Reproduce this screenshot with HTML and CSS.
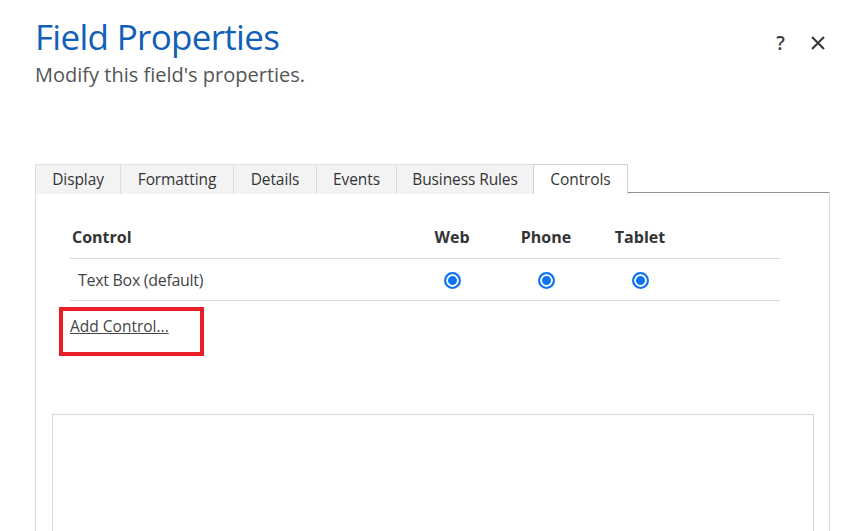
FILE: index.html
```html
<!DOCTYPE html>
<html>
<head>
<meta charset="utf-8">
<link rel="stylesheet" href="styles.css">
</head>
<body>
<div class="dialog">
  <header class="head">
    <div class="titles">
      <h1 class="title">Field Properties</h1>
      <p class="subtitle">Modify this field's properties.</p>
    </div>
    <div class="actions">
      <span class="help">?</span>
      <svg class="close" width="16" height="16" viewBox="0 0 16 16"><path d="M2 2 L14 14 M14 2 L2 14" stroke="#3b3b3b" stroke-width="2.2" fill="none"/></svg>
    </div>
  </header>
  <div class="panel">
    <div class="tabs">
      <div class="tab t-display">Display</div>
      <div class="tab t-format">Formatting</div>
      <div class="tab t-details">Details</div>
      <div class="tab t-events">Events</div>
      <div class="tab t-rules">Business Rules</div>
      <div class="tab t-controls active">Controls</div>
      <div class="tab-fill"></div>
    </div>
    <div class="body">
      <div class="grid">
        <div class="hcell first">Control</div>
        <div class="hcell c">Web</div>
        <div class="hcell c">Phone</div>
        <div class="hcell c">Tablet</div>
        <div class="hcell"></div>
        <div class="cell first">Text Box (default)</div>
        <div class="cell c"><span class="radio"></span></div>
        <div class="cell c"><span class="radio"></span></div>
        <div class="cell c"><span class="radio"></span></div>
        <div class="cell"></div>
      </div>
      <div class="add-wrap"><a class="add" href="#">Add Control...</a></div>
      <div class="props"></div>
    </div>
  </div>
</div>
</body>
</html>
```

FILE: styles.css
```css
* { box-sizing: border-box; }
html, body { margin: 0; padding: 0; background: #fff; overflow: hidden; }
body {
  font-family: "Segoe UI", "Open Sans", "Noto Sans", sans-serif;
  color: #333;
  width: 862px;
  height: 531px;
}
.dialog { height: 531px; display: flex; flex-direction: column; }
.head {
  display: flex;
  justify-content: space-between;
  padding: 14px 36px 0 35px;
  height: 164px;
}
.title {
  margin: 0;
  font-weight: 400;
  font-size: 35px;
  line-height: 46px;
  color: #1160b7;
  letter-spacing: -0.7px;
}
.subtitle {
  margin: 2px 0 0;
  font-size: 20px;
  line-height: 26px;
  color: #555;
}
.actions {
  display: flex;
  align-items: center;
  gap: 25px;
  height: 28px;
  margin-top: 15px;
}
.help { font-size: 19px; font-weight: 600; color: #3b3b3b; line-height: 20px; }
.close { display: block; }
.panel {
  margin: 0 32px 0 35px;
  flex: 1;
  display: flex;
  flex-direction: column;
}
.tabs { display: flex; height: 30px; }
.tab {
  background: #f3f3f3;
  border-top: 1px solid #e1e1e1;
  border-right: 1px solid #dcdcdc;
  font-size: 15.5px;
  line-height: 29px;
  color: #333;
  text-align: center;
  letter-spacing: -0.1px;
  flex: none;
}
.t-display { width: 86px; border-left: 1px solid #dcdcdc; }
.t-format { width: 113px; }
.t-details { width: 83px; }
.t-events { width: 80px; }
.t-rules { width: 137px; }
.t-controls { width: 95px; }
.tab.active {
  background: #fff;
  border-top: 1px solid #d0d0d0;
  border-left: 1px solid #d0d0d0;
  border-right: 1px solid #d0d0d0;
  margin-left: -1px;
}
.tab-fill { flex: 1; border-bottom: 1px solid #8f8f8f; margin-bottom: 1px; }
.body {
  flex: 1;
  border-left: 1px solid #dcdcdc;
  border-right: 1px solid #dcdcdc;
  margin-top: -2px;
  padding: 25px 15px 0 16px;
  display: flex;
  flex-direction: column;
}
.grid {
  display: grid;
  grid-template-columns: 335px 94px 94px 94px 93px;
  margin-left: 18px;
  width: 710px;
}
.hcell {
  height: 42px;
  line-height: 41px;
  font-weight: 700;
  font-size: 16px;
  color: #333;
  border-bottom: 1px solid #dadada;
}
.hcell.first { padding-left: 2px; }
.cell {
  height: 42px;
  display: flex;
  align-items: center;
  font-size: 16px;
  color: #444;
  border-bottom: 1px solid #dadada;
  padding-top: 1px;
}
.cell.first { padding-left: 8px; letter-spacing: -0.3px; }
.c { text-align: center; justify-content: center; }
.radio {
  width: 17px;
  height: 17px;
  border-radius: 50%;
  border: 2px solid #0e73f5;
  background: #0e73f5;
  box-shadow: inset 0 0 0 2px #fff;
  display: block;
}
.add-wrap {
  margin: 6px 0 0 7px;
  width: 145px;
  height: 49px;
  border: 4px solid #e81f26;
  padding: 4px 0 0 7px;
}
.add {
  font-size: 15.5px;
  color: #444;
  text-decoration: underline;
}
.props {
  margin-top: 58px;
  flex: 1;
  border: 1px solid #d6d6d6;
  border-bottom: none;
}
```
